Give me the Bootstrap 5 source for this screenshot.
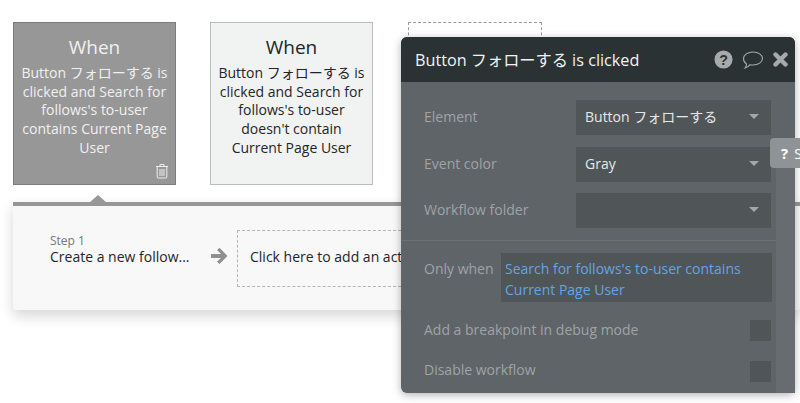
<!DOCTYPE html>
<html lang="en">
<head>
<meta charset="utf-8">
<title>Workflow editor</title>
<link rel="stylesheet" href="https://cdn.jsdelivr.net/npm/bootstrap@5.3.0/dist/css/bootstrap.min.css">
<style>
html,body{height:100%;overflow:hidden;background:#fff}
body{font-family:"Open Sans","Noto Sans CJK JP",sans-serif;color:#1f2528;width:800px;height:403px;position:relative}
.stage{padding:22px 0 0 13px}
.events{gap:34px}
.ev-card{width:163px;height:163px;border:1px solid #b9bdbb;background:#f1f2f2;text-align:center;font-size:14px;line-height:18.7px;padding:12px 5px 0;position:relative;flex:none}
.ev-card.gray-card{background:#979797;border-color:#7c7c7c;color:#f0f0f0}
.ev-title{font-size:19px;line-height:24px;margin-bottom:5px}
.ev-trash{position:absolute;right:6px;bottom:5px;display:block}
.ev-ghost{width:134px;height:60px;border:1px dashed #9a9a9a;margin-left:1px;flex:none}
.strip{margin-top:17px;height:108px;background:#f8f8f8;border-top:4px solid #979797;box-shadow:0 6px 14px rgba(0,0,0,.16);position:relative;padding:24px 0 0 37px;border-radius:0 0 3px 3px}
.strip-tip{position:absolute;left:76px;top:-11px;width:0;height:0;border-left:9px solid transparent;border-right:9px solid transparent;border-bottom:8px solid #979797}
.step{width:160px;flex:none;padding-top:4px}
.step-no{font-size:12px;line-height:14px;color:#777}
.step-name{font-size:14px;line-height:18px;color:#1f2528;white-space:nowrap}
.step-arrow{width:27px;flex:none;margin-top:18px;display:block}
.act-box{width:300px;height:57px;border:1px dashed #b5b5b5;font-size:14px;padding:15px 12px;white-space:nowrap;flex:none}
.panel{position:absolute;left:401px;top:37px;width:394px;height:356px;background:#5f6469;border-radius:6px;box-shadow:0 2px 8px rgba(0,0,0,.3);overflow:hidden;color:#9fa3a6;font-size:14px}
.panel-head{height:45px;background:#2b3234;color:#f2f2f2;font-size:16.2px;padding:0 7px 0 14px}
.head-title{padding-top:2px}
.head-gap{margin-right:9px}
.panel-body{padding:18px 24px 0 23px}
.p-row{height:46.5px}
.p-label{width:152px;flex:none;padding-top:6px}
.p-select{width:195px;height:35px;background:#505558;color:#e6e8e8;padding:0 10px 2px 9px;font-size:14px;flex:none}
.p-caret{width:0;height:0;border-left:5px solid transparent;border-right:5px solid transparent;border-top:5px solid #a3a7aa;margin-right:2px}
.p-sep{border-top:1px solid #6b7074;margin:0 -23px;height:0}
.p-when{margin-top:12px}
.p-when-label{width:77px;flex:none;padding-top:5px}
.p-when-box{width:271px;height:49px;background:#505558;color:#62a5e6;padding:5px 4px;line-height:21px;flex:none}
.p-check{width:21px;height:21px;background:#505558;flex:none}
.p-check-row{height:40.5px}
.p-check-row span:first-child{padding-bottom:3px}
.p-check-row.first{margin-top:9px}
.help-tab{position:absolute;left:770px;top:138px;width:30px;height:30px;background:#8f9395;border-radius:4px 0 0 4px;color:#fff;font-size:14px;padding-left:11px;line-height:30px;overflow:hidden;white-space:nowrap}
.help-tab b{margin-right:6px;font-size:15px}
.help-shade{position:absolute;left:776px;top:168px;width:19px;height:225px;background:#686c70}
</style>
</head>
<body>
<div class="stage">
  <div class="events d-flex align-items-start">
    <div class="ev-card gray-card">
      <div class="ev-title">When</div>
      Button フォローする is clicked and Search for follows's to-user contains Current Page User
      <svg class="ev-trash" width="14" height="16" viewBox="0 0 14 16" fill="none" stroke="#eee" stroke-width="1"><path d="M1 3.500h12M5 3.500V1.500h4v2M2.200 3.500v10.500a1 1 0 0 0 1 1h7.600a1 1 0 0 0 1-1V3.500M5 6v7M7 6v7M9 6v7"/></svg>
    </div>
    <div class="ev-card">
      <div class="ev-title">When</div>
      Button フォローする is clicked and Search for follows's to-user doesn't contain Current Page User
    </div>
    <div class="ev-ghost"></div>
  </div>
  <div class="strip d-flex align-items-start">
    <span class="strip-tip"></span>
    <div class="step">
      <div class="step-no">Step 1</div>
      <div class="step-name">Create a new follow...</div>
    </div>
    <svg class="step-arrow" width="27" height="16" viewBox="0 0 27 16"><path d="M1 6h10L7 2l2.500-2.200L17.500 8 9.500 16 7 13.800 11 10H1z" fill="#8f8f8f"/></svg>
    <div class="act-box">Click here to add an action...</div>
  </div>
</div>

<div class="panel">
  <div class="panel-head d-flex align-items-center">
    <div class="flex-grow-1 head-title">Button フォローする is clicked</div>
    <svg width="19" height="19" viewBox="0 0 20 20" class="head-gap"><circle cx="10" cy="10" r="9.500" fill="#a6aaac"/><text x="10" y="15.500" text-anchor="middle" font-family="Liberation Sans" font-weight="700" font-size="15" fill="#2b3234">?</text></svg>
    <svg width="22" height="20" viewBox="0 0 22 20" fill="none" stroke="#a6aaac" stroke-width="1.100" class="head-gap"><path d="M11 2c5.200 0 9.500 2.900 9.500 6.500S16.200 15 11 15c-1 0-2-.1-2.900-.3C6.800 16.300 5 17.500 3 18c1-1.200 1.500-2.500 1.500-4C2.500 12.800 1.500 10.700 1.500 8.500 1.500 4.900 5.800 2 11 2z"/></svg>
    <svg width="15" height="15" viewBox="0 0 15 15" stroke="#a6aaac" stroke-width="4.400" stroke-linecap="round"><path d="M2.500 2.500l10 10M12.500 2.500l-10 10"/></svg>
  </div>
  <div class="panel-body">
    <div class="p-row d-flex align-items-start">
      <div class="p-label">Element</div>
      <div class="p-select d-flex align-items-center justify-content-between"><span>Button フォローする</span><span class="p-caret"></span></div>
    </div>
    <div class="p-row d-flex align-items-start">
      <div class="p-label">Event color</div>
      <div class="p-select d-flex align-items-center justify-content-between"><span>Gray</span><span class="p-caret"></span></div>
    </div>
    <div class="p-row d-flex align-items-start">
      <div class="p-label">Workflow folder</div>
      <div class="p-select d-flex align-items-center justify-content-end"><span class="p-caret"></span></div>
    </div>
    <div class="p-sep"></div>
    <div class="p-when d-flex align-items-start">
      <div class="p-when-label">Only when</div>
      <div class="p-when-box">Search for follows's to-user contains Current Page User</div>
    </div>
    <div class="p-check-row first d-flex align-items-center justify-content-between"><span>Add a breakpoint in debug mode</span><span class="p-check"></span></div>
    <div class="p-check-row d-flex align-items-center justify-content-between"><span>Disable workflow</span><span class="p-check"></span></div>
  </div>
</div>
<div class="help-shade"></div>
<div class="help-tab"><b>?</b>Search</div>
<script src="https://cdn.jsdelivr.net/npm/bootstrap@5.3.0/dist/js/bootstrap.bundle.min.js"></script>
</body>
</html>
